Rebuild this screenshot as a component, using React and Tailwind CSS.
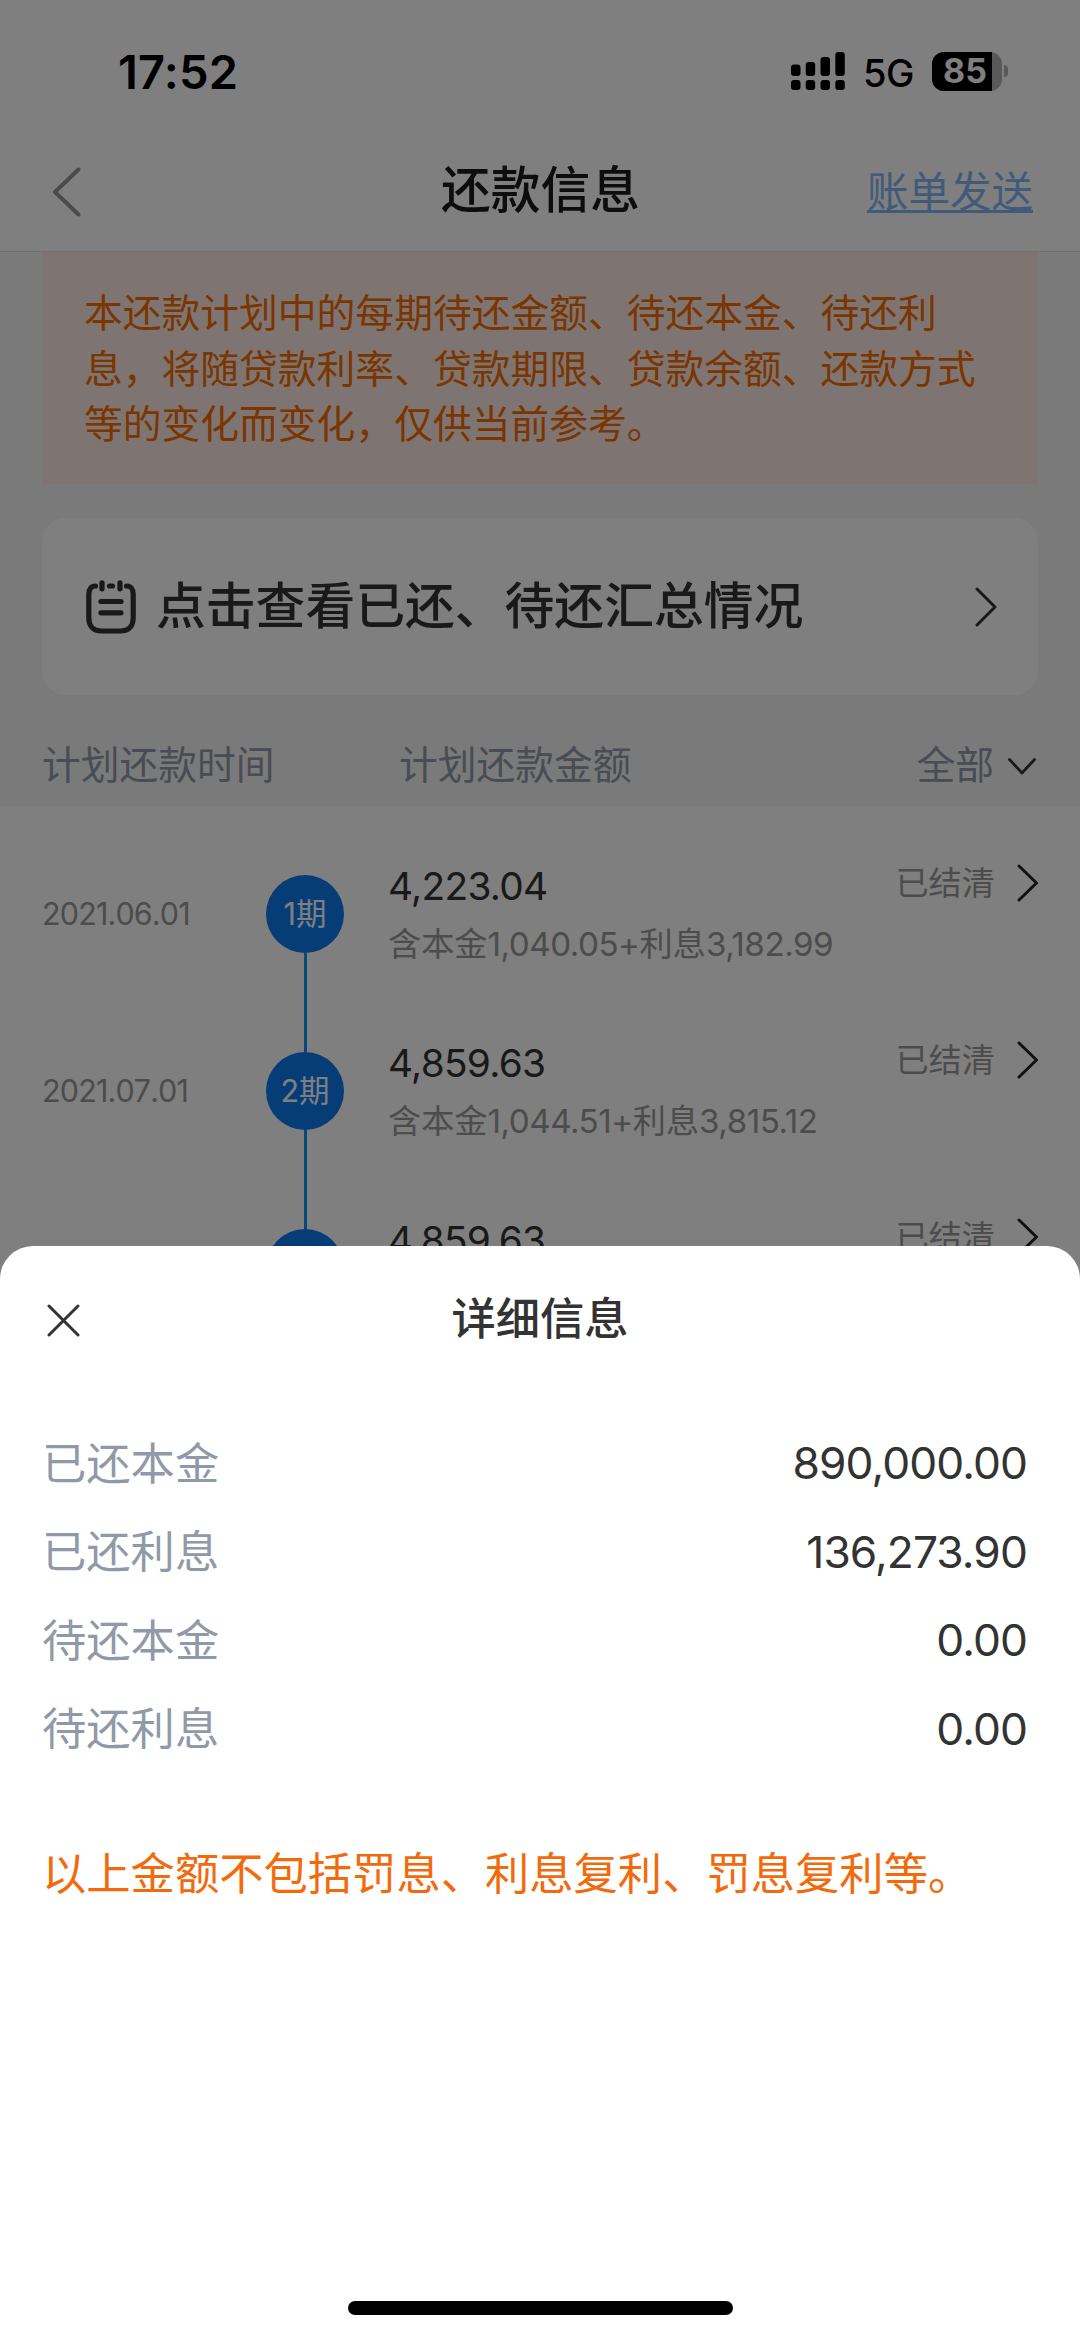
import React from 'react';

const installments = [
  { date: '2021.06.01', term: '1期', amount: '4,223.04', principal: '1,040.05', interest: '3,182.99' },
  { date: '2021.07.01', term: '2期', amount: '4,859.63', principal: '1,044.51', interest: '3,815.12' },
  { term: '3期', amount: '4,859.63' },
];

const summary = [
  { label: '已还本金', value: '890,000.00' },
  { label: '已还利息', value: '136,273.90' },
  { label: '待还本金', value: '0.00' },
  { label: '待还利息', value: '0.00' },
];

const Chevron = ({ className, points, width, height, stroke }) => (
  <svg className={className} width={width} height={height} viewBox={`0 0 ${width} ${height}`} fill="none">
    <polyline points={points} stroke="currentColor" strokeWidth={stroke} strokeLinecap="round" strokeLinejoin="round" />
  </svg>
);

const SignalIcon = () => (
  <svg className="ml-auto" width="54" height="38" viewBox="0 0 54 38" fill="#000">
    <rect x="0" y="12.5" width="9.5" height="11.5" rx="3" />
    <rect x="14.7" y="10" width="9.5" height="14" rx="3" />
    <rect x="29.5" y="5" width="9.5" height="19" rx="3" />
    <rect x="44.3" y="0" width="9.5" height="24" rx="3" />
    <rect x="0" y="28" width="9.5" height="10" rx="3" />
    <rect x="14.7" y="28" width="9.5" height="10" rx="3" />
    <rect x="29.5" y="28" width="9.5" height="10" rx="3" />
    <rect x="44.3" y="28" width="9.5" height="10" rx="3" />
  </svg>
);

const StatusBar = () => (
  <div className="flex h-[142px] items-center pl-[118px] pr-[72px]">
    <span className="text-[47px] font-semibold leading-none tracking-[0.2px] text-black">17:52</span>
    <SignalIcon />
    <span className="ml-[18px] mt-[3px] text-[38px] font-medium leading-none tracking-[-0.5px] text-black">5G</span>
    <div className="ml-[18px] flex items-center gap-[2px]">
      <div className="flex h-[39px] w-[70px] rounded-[12px] bg-[#b2b2b2]">
        <div className="flex w-[60px] items-center justify-center rounded-l-[12px] bg-black pl-[6px] text-[34px] font-bold leading-none text-white">85</div>
      </div>
      <div className="h-[12px] w-[4px] rounded-r-full bg-[#b2b2b2]" />
    </div>
  </div>
);

const NavBar = () => (
  <div className="flex h-[110px] items-center justify-between border-b border-[#e0e0e0] pb-[10px] pl-[47px] pr-[47px]">
    <div className="w-[167px] pl-[5px]">
      <Chevron className="text-[#969696]" width={29} height={50} points="26.5,2.5 3,25 26.5,47.5" stroke={4} />
    </div>
    <h1 className="mb-px text-[49.8px] font-medium leading-none text-[#1a1a1a]">还款信息</h1>
    <a className="mt-[3px] text-[41.5px] leading-none text-[#84b4f4] underline decoration-[3px] underline-offset-[3px]">账单发送</a>
  </div>
);

const NoteIcon = () => (
  <svg width="50" height="54" viewBox="0 0 50 54" fill="none" stroke="#333" strokeWidth="5.2" strokeLinecap="round">
    <path d="M9.5 6C5 6 2.8 9.5 2.8 14v24c0 8 4.5 13 12.5 13h19.4c8 0 12.5-5 12.5-13V14c0-4.500-2.200-8-6.700-8" />
    <path d="M16 2.8v6M34 2.8v6M23.5 6h3M15 21.5h20M15 32.8h20" />
  </svg>
);

const InstallmentRow = ({ item, last }) => (
  <div className="flex h-[177.2px] items-start">
    <div className="flex h-[79px] w-[224px] items-center text-[30.5px] leading-none tracking-[-0.85px] text-[#999] [font-kerning:none]">{item.date}</div>
    <div className="flex h-full w-[78px] flex-col items-center">
      <div className="flex h-[77.5px] w-[77.5px] shrink-0 items-center justify-center rounded-full bg-[#0c7aee] text-[30.5px] leading-none text-white">{item.term}</div>
      {!last && <div className="w-[3px] flex-1 bg-[#1090ff]" />}
    </div>
    <div className="ml-[44px] flex flex-col">
      <span className="mt-[-9px] text-[38.8px] leading-[40px] tracking-[-0.7px] text-[#333]">{item.amount}</span>
      {item.principal && (
        <span className="mt-[18px] text-[33.2px] leading-[40px] text-[#999]">
          含本金<span className="tracking-[-0.5px]">{item.principal}+</span>利息<span className="tracking-[-0.5px]">{item.interest}</span>
        </span>
      )}
    </div>
    <div className="ml-auto mt-[-13px] flex items-center">
      <span className="text-[33.2px] leading-[42px] text-[#999]">已结清</span>
      <Chevron className="ml-[22px] text-[#222]" width={22} height={38} points="2,2 19.5,19 2,36" stroke={3} />
    </div>
  </div>
);

const DetailSheet = () => (
  <div className="absolute inset-x-0 bottom-0 flex h-[1091.5px] flex-col rounded-t-[33px] bg-white">
    <div className="flex h-[148px] items-center justify-between px-[47px]">
      <svg className="mt-px" width="33" height="33" viewBox="0 0 33 33" stroke="#333" strokeWidth="3" strokeLinecap="round">
        <path d="M2 2l29 29M31 2L2 31" />
      </svg>
      <h2 className="text-[44.3px] font-medium leading-none text-[#333]">详细信息</h2>
      <div className="w-[33px]" />
    </div>
    <div className="mt-[26px] flex flex-col pl-[42px] pr-[53px]">
      {summary.map((row) => (
        <div key={row.label} className="flex h-[88.6px] items-center justify-between text-[44.3px] leading-none">
          <span className="text-[#9099a8]">{row.label}</span>
          <span className="mb-px tracking-[-0.9px] text-[#333]">{row.value}</span>
        </div>
      ))}
    </div>
    <p className="mt-[78px] pl-[42px] text-[44.3px] leading-none text-[#f26a0c]">以上金额不包括罚息、利息复利、罚息复利等。</p>
    <div className="mx-auto mb-[22px] mt-auto h-[14px] w-[385px] rounded-full bg-black" />
  </div>
);

export default function App() {
  return (
    <div className="relative h-[2337px] w-[1080px] overflow-hidden bg-white font-['Inter','Noto_Sans_CJK_SC',sans-serif]">
      <StatusBar />
      <NavBar />
      <div className="h-[553.5px] bg-[#f4f4f4] px-[42px]">
        <div className="h-[232px] bg-[#fdebe5] px-[42px] pt-[33px] text-[38.77px] leading-[55.6px] text-[#f46a00]">
          <p className="whitespace-nowrap">本还款计划中的每期待还金额、待还本金、待还利</p>
          <p className="whitespace-nowrap">息，将随贷款利率、贷款期限、贷款余额、还款方式</p>
          <p className="whitespace-nowrap">等的变化而变化，仅供当前参考。</p>
        </div>
        <div className="mt-[34px] flex h-[177px] items-center rounded-[24px] bg-white pl-[44px] pr-[41px]">
          <NoteIcon />
          <span className="ml-[20px] text-[49.8px] font-medium leading-none text-[#333]">点击查看已还、待还汇总情况</span>
          <Chevron className="ml-auto text-[#333]" width={22} height={40} points="2,2 20,20 2,38" stroke={3} />
        </div>
        <div className="flex h-[110px] items-center pt-[30px] text-[38.77px] leading-none text-[#9099a8]">
          <span className="w-[357px]">计划还款时间</span>
          <span>计划还款金额</span>
          <span className="ml-auto">全部</span>
          <Chevron className="ml-[14px] mr-[2px] mt-[3px] text-[#333]" width={28} height={17} points="1.5,1.5 14,15 26.5,1.5" stroke={2.8} />
        </div>
      </div>
      <div className="flex flex-col pl-[42px] pr-[41px] pt-[69.5px]">
        {installments.map((item, i) => (
          <InstallmentRow key={item.term} item={item} last={i === installments.length - 1} />
        ))}
      </div>
      <div className="absolute inset-0 bg-black/50" />
      <DetailSheet />
    </div>
  );
}
